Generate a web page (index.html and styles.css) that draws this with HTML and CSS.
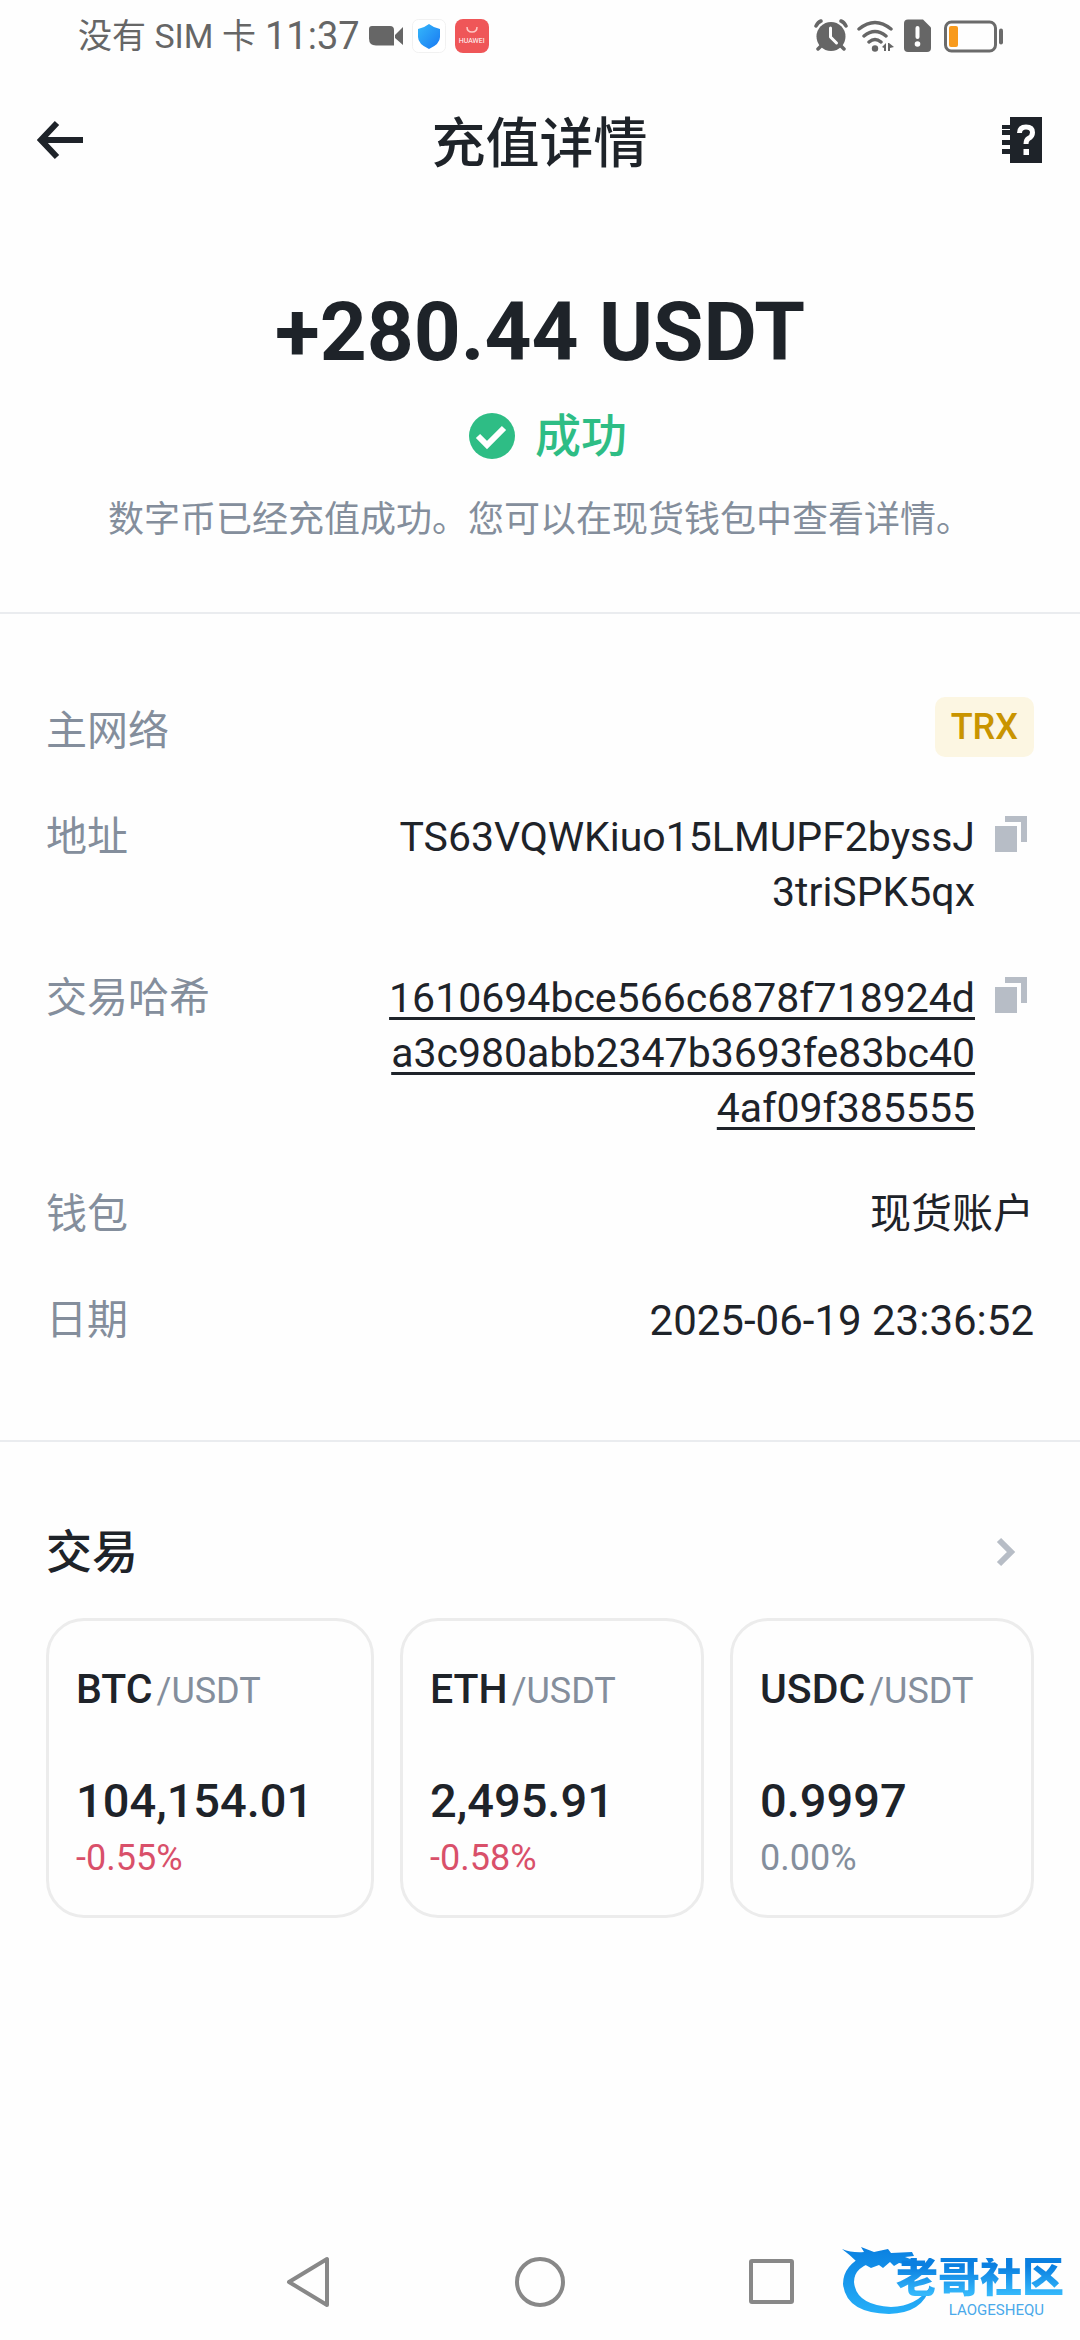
FILE: index.html
```html
<!DOCTYPE html>
<html lang="zh-CN">
<head>
<meta charset="utf-8">
<meta name="viewport" content="width=device-width, initial-scale=1">
<title>充值详情</title>
<link rel="stylesheet" href="styles.css">
</head>
<body>
<div class="status-bar">
  <div class="status-left">
    <span class="carrier">没有 SIM 卡</span>
    <span class="clock">11:37</span>
    <svg class="cam" width="34" height="20" viewBox="0 0 34 20" fill="#666"><path d="M3 0h18q4 0 4 4v15.500H7q-7 0-7-7V3q0-3 3-3zM26 9l8-8v18l-8-7z"/></svg>
    <svg width="34" height="34" viewBox="0 0 34 34"><defs><linearGradient id="sh" x1="0" y1="0" x2="1" y2="1"><stop offset="0" stop-color="#35b8fb"/><stop offset="1" stop-color="#1878f2"/></linearGradient></defs><rect x=".5" y=".5" width="33" height="33" rx="6" fill="#fff" stroke="#f1f1f1"/><path d="M17 5q5 4 11 5v8q0 7-11 12Q6 25 6 18v-8q6-1 11-5z" fill="url(#sh)"/></svg>
    <span class="store"><svg width="12" height="7" viewBox="0 0 12 7" fill="none" stroke="#ffc9c6" stroke-width="1.500"><path d="M1 0q0 5 5 5t5-5"/></svg><span>HUAWEI</span></span>
  </div>
  <div class="status-right">
    <svg width="34" height="34" viewBox="0 0 34 34"><g stroke="#666" stroke-width="3.500" stroke-linecap="round" fill="none"><path d="M2 7q2-4 5-5M32 7q-2-4-5-5M8 26l-4 4M26 26l4 4"/></g><circle cx="17" cy="17.500" r="14.500" fill="#666"/><path d="M16.500 9v9l6 6" fill="none" stroke="#fefefe" stroke-width="3" stroke-linecap="round" stroke-linejoin="round"/></svg>
    <svg width="38" height="34" viewBox="0 0 38 34"><g fill="none" stroke="#666" stroke-width="3.500" stroke-linecap="round"><path d="M2 10q16-13 32 0M7 17q11-9 22 0M12 23q6-5 12 0"/></g><circle cx="18" cy="29.500" r="3.200" fill="#666"/><path d="M25 28l4-4v8h-2v-3zM31 24h1l5 4-4 1v3h-2z" fill="#666"/></svg>
    <svg width="27" height="34" viewBox="0 0 27 34"><path d="M4 .5h15l8 8V29q0 4-4 4H4q-4 0-4-4V4.500q0-4 4-4z" fill="#666"/><path d="M13.500 9v9" stroke="#fff" stroke-width="4" stroke-linecap="round"/><circle cx="13.500" cy="25" r="2.800" fill="#fff"/></svg>
    <svg class="battery" width="60" height="34" viewBox="0 0 60 34"><rect x="1.500" y="3" width="50" height="29" rx="6" fill="none" stroke="#6b6b6b" stroke-width="3"/><rect x="5" y="7" width="9" height="21" rx="2" fill="#f89a1c"/><path d="M57 11.500v12" stroke="#6b6b6b" stroke-width="4" stroke-linecap="round"/></svg>
  </div>
</div>

<header class="header">
  <button class="icon-btn" aria-label="返回"><svg width="48" height="40" viewBox="0 0 48 40" fill="none" stroke="#1e2329" stroke-width="6"><path d="M46 20H6M20 3L4 20l16 17"/></svg></button>
  <h1>充值详情</h1>
  <button class="icon-btn icon-end" aria-label="帮助"><svg width="40" height="46" viewBox="0 0 40 46"><path d="M8 0h32v46H8V37H0v-5h8v-4H0v-5h8v-5H0v-5h8v-1H0V8h8z" fill="#1e2329"/><path d="M17.500 16q0-6 6.500-6t6.500 5.500q0 4-4 6-2.500 1.500-2.500 5.500" fill="none" stroke="#fff" stroke-width="5"/><path d="M21.500 32h5.500v6h-5.500z" fill="#fff"/></svg></button>
</header>

<main>
  <section class="summary">
    <p class="amount">+280.44 USDT</p>
    <p class="result"><svg width="46" height="46" viewBox="0 0 46 46"><circle cx="23" cy="23" r="23" fill="#2ebd85"/><path d="M9 23l9 9 17-17" fill="none" stroke="#fff" stroke-width="6"/></svg><span>成功</span></p>
    <p class="note">数字币已经充值成功。您可以在现货钱包中查看详情。</p>
  </section>

  <dl class="details">
    <div class="row"><dt>主网络</dt><dd><span class="tag">TRX</span></dd></div>
    <div class="row"><dt>地址</dt><dd><span>TS63VQWKiuo15LMUPF2byssJ<br>3triSPK5qx</span><button class="copy" aria-label="复制地址"><svg width="32" height="36" viewBox="0 0 32 36" fill="#b7bdc6"><path d="M0 10h22v26H0zM10 0h22v26h-6V6H10z"/></svg></button></dd></div>
    <div class="row"><dt>交易哈希</dt><dd><a href="#tx">1610694bce566c6878f718924d<br>a3c980abb2347b3693fe83bc40<br>4af09f385555</a><button class="copy" aria-label="复制交易哈希"><svg width="32" height="36" viewBox="0 0 32 36" fill="#b7bdc6"><path d="M0 10h22v26H0zM10 0h22v26h-6V6H10z"/></svg></button></dd></div>
    <div class="row"><dt>钱包</dt><dd>现货账户</dd></div>
    <div class="row"><dt>日期</dt><dd class="date">2025-06-19 23:36:52</dd></div>
  </dl>

  <section class="trade">
    <a class="trade-head" href="#trade"><h2>交易</h2><svg width="20" height="30" viewBox="0 0 20 30" fill="none" stroke="#b7bdc6" stroke-width="6"><path d="M3 3l12 12L3 27"/></svg></a>
    <div class="cards">
      <a class="card" href="#btc"><span class="pair"><b>BTC</b><i>/USDT</i></span><span class="price">104,154.01</span><span class="change down">-0.55%</span></a>
      <a class="card" href="#eth"><span class="pair"><b>ETH</b><i>/USDT</i></span><span class="price">2,495.91</span><span class="change down">-0.58%</span></a>
      <a class="card" href="#usdc"><span class="pair"><b>USDC</b><i>/USDT</i></span><span class="price">0.9997</span><span class="change">0.00%</span></a>
    </div>
  </section>
</main>

<nav class="nav">
  <button aria-label="后退"><svg width="50" height="52" viewBox="0 0 50 52"><path d="M43 3v46L5 26z"/></svg></button>
  <button aria-label="主页"><svg width="50" height="52" viewBox="0 0 50 52"><circle cx="25" cy="26" r="23"/></svg></button>
  <button aria-label="最近任务"><svg width="50" height="52" viewBox="0 0 50 52"><rect x="5" y="5" width="41" height="41" rx="1"/></svg></button>
</nav>

<div class="watermark">
  <svg width="92" height="72" viewBox="0 0 92 72"><defs><linearGradient id="dr" x1="0" y1="0" x2="0" y2="72" gradientUnits="userSpaceOnUse"><stop offset="0" stop-color="#0a7fe0"/><stop offset="1" stop-color="#27b2fa"/></linearGradient></defs><g fill="url(#dr)"><path d="M0 3q10 4 22 3l-3-5 13 5 14-3 3 4 21-1 2 4-9 1 8 3-3 5-11-2-5 3-4-4-7 6-4-3-8 3-9-5-6-2Q8 9 0 3z"/><path d="M24 9Q1 19 1 38q3 29 46 30 34-1 41-27-13 19-39 20-35-2-37-25 0-16 24-21z"/></g></svg>
  <span class="wm-name">老哥社区</span>
  <span class="wm-latin">LAOGESHEQU</span>
</div>
</body>
</html>
```
FILE: styles.css
```css
* { box-sizing: border-box; }

body {
  margin: 0;
  min-height: 100vh;
  display: flex;
  flex-direction: column;
  position: relative;
  background: #fefefe;
  color: #1e2329;
  font-family: Roboto, "Noto Sans CJK SC", sans-serif;
}

h1, h2, p, dl, dd { margin: 0; }
a { color: inherit; text-decoration: none; }
svg { display: block; flex: none; }
button {
  padding: 0;
  border: 0;
  background: none;
  cursor: pointer;
}

.status-bar {
  height: 72px;
  padding: 0 76px 0 78px;
  display: flex;
  align-items: center;
  justify-content: space-between;
  color: #666;
}
.status-left, .status-right { display: flex; align-items: center; gap: 9px; }
.carrier { font-size: 34px; line-height: 40px; }
.clock { font-size: 38px; line-height: 40px; }
.battery { margin-left: 4px; }
.store {
  width: 34px;
  height: 34px;
  border-radius: 8px;
  background: #ef5658;
  color: #fff;
  display: flex;
  flex-direction: column;
  align-items: center;
  justify-content: center;
  gap: 3px;
  font-size: 7px;
  line-height: 8px;
}

.header {
  height: 136px;
  padding: 0 38px 0 37px;
  display: grid;
  grid-template-columns: 1fr auto 1fr;
  align-items: center;
}
.header h1 {
  padding-top: 10px;
  font-size: 54px;
  line-height: 64px;
  font-weight: 500;
}
.icon-btn { justify-self: start; }
.icon-end { justify-self: end; }

.summary {
  padding: 76px 40px 66px;
  display: flex;
  flex-direction: column;
  align-items: center;
  border-bottom: 2px solid #eaecef;
}
.amount { font-size: 82px; line-height: 96px; font-weight: 700; }
.result {
  margin-top: 24px;
  padding-left: 16px;
  display: flex;
  align-items: center;
  gap: 20px;
  color: #2ebd85;
  font-size: 46px;
  line-height: 64px;
  font-weight: 500;
}
.note {
  margin-top: 26px;
  color: #848e9c;
  font-size: 36px;
  line-height: 52px;
}

.details {
  padding: 90px 46px 92px;
  display: flex;
  flex-direction: column;
  gap: 51px;
  border-bottom: 2px solid #eaecef;
  font-size: 41px;
  line-height: 55px;
}
.row { display: flex; justify-content: space-between; }
.row dt { color: #848e9c; }
.row dd { display: flex; align-items: flex-start; text-align: right; }
.row .date { font-size: 42px; }
.row a {
  text-decoration: underline;
  text-decoration-thickness: 3px;
  text-underline-offset: 5px;
  text-decoration-skip-ink: none;
}
.copy { margin: 6px 7px 0 20px; }
.tag {
  height: 60px;
  margin: -7px 0 2px;
  padding: 0 16px;
  border-radius: 10px;
  background: #fcf6e2;
  color: #c99400;
  font-size: 36px;
  line-height: 60px;
  font-weight: 500;
}

.trade { padding: 78px 46px 0; }
.trade-head {
  padding-right: 18px;
  display: flex;
  align-items: center;
  justify-content: space-between;
}
.trade-head h2 { font-size: 46px; line-height: 64px; font-weight: 500; }
.cards {
  margin-top: 34px;
  display: grid;
  grid-template-columns: 328fr 304fr 304fr;
  gap: 26px;
}
.card {
  padding: 42px 27px 32px;
  display: flex;
  flex-direction: column;
  border: 3px solid #ececec;
  border-radius: 38px;
}
.pair { font-size: 41px; line-height: 52px; white-space: nowrap; }
.pair b { font-weight: 500; }
.pair i { margin-left: 4px; font-size: 36px; font-style: normal; color: #848e9c; }
.price { margin-top: 52px; font-size: 47px; line-height: 64px; font-weight: 500; }
.change { font-size: 36px; line-height: 50px; color: #848e9c; }
.down { color: #d9506a; }

.nav {
  margin-top: auto;
  padding: 0 284px 32px;
  display: flex;
  justify-content: space-between;
}
.nav svg {
  fill: none;
  stroke: #888;
  stroke-width: 4;
  stroke-linejoin: round;
}

.watermark {
  position: absolute;
  right: 16px;
  bottom: 22px;
  width: 222px;
  height: 72px;
}
.wm-name, .wm-latin { position: absolute; right: 0; white-space: nowrap; }
.wm-name {
  top: 12px;
  font-size: 42px;
  line-height: 40px;
  font-weight: 900;
  background: linear-gradient(#0a7fe0 20%, #35b8fb 90%);
  background-clip: text;
  -webkit-background-clip: text;
  color: transparent;
}
.wm-latin {
  top: 56px;
  right: 20px;
  font-size: 15px;
  line-height: 16px;
  color: #4aa9ea;
}
```
